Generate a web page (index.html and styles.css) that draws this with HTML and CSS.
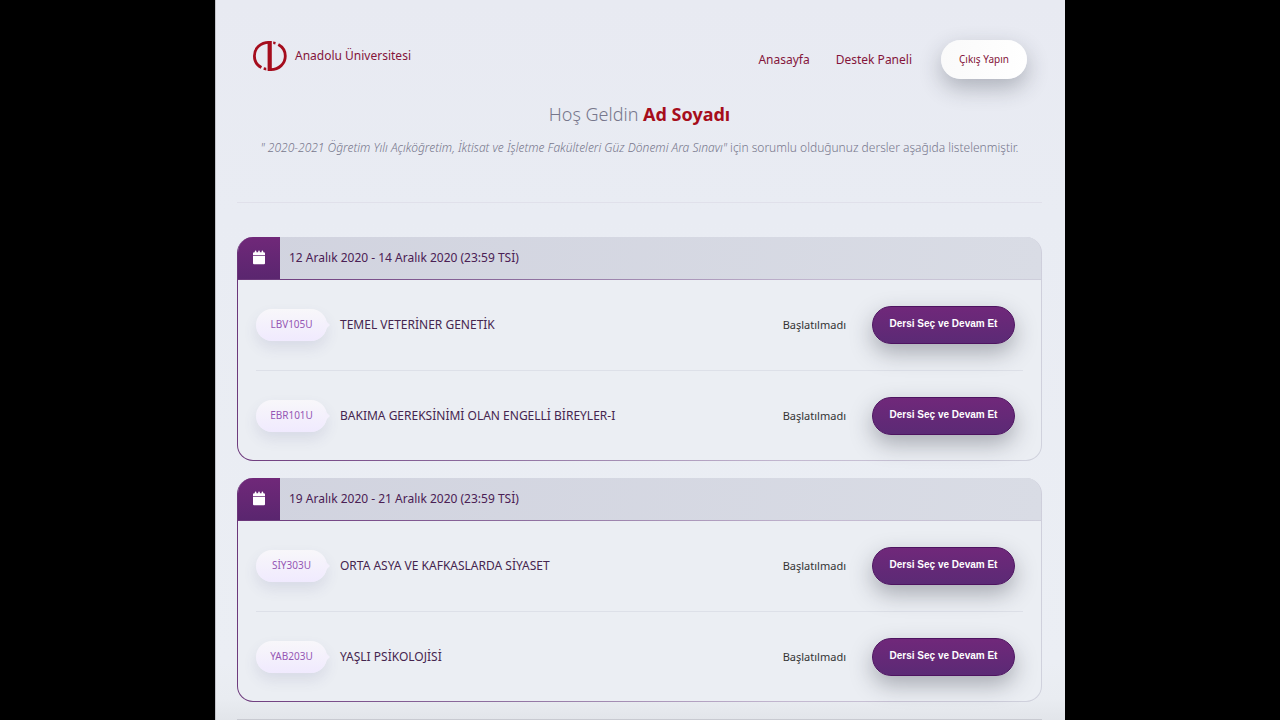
FILE: index.html
```html
<!DOCTYPE html>
<html lang="tr">
<head>
<meta charset="utf-8">
<meta name="viewport" content="width=device-width, initial-scale=1">
<title>Anadolu Üniversitesi</title>
<link rel="stylesheet" href="styles.css">
</head>
<body>
<svg class="defs" aria-hidden="true">
  <symbol id="calendar" viewBox="0 0 12 15">
    <path d="M0 5V3.400Q0 2.300 1.200 2.300H1.800V1.200Q1.800.4 2.600.4T3.400 1.200V2.300H5.200V1.200Q5.200.4 6 .4T6.800 1.200V2.300H8.600V1.200Q8.600.4 9.400.4T10.200 1.200V2.300H10.800Q12 2.300 12 3.400V5Z"/>
    <path d="M0 5.700h12v7.500q0 1-1 1H1q-1 0-1-1z"/>
  </symbol>
</svg>
<div class="page">
  <header class="top">
    <a class="brand" href="#">
      <svg class="logo" viewBox="0 0 36 32" aria-hidden="true">
        <g fill="none" stroke="#a50d1d" stroke-width="2.800">
          <path d="M18.400 2.400H17C8.500 2.400 2.400 8.400 2.400 16c0 5 2.500 9.200 7 11.600"/>
          <path d="M17 29.600h1.800c8.300 0 14.500-6.100 14.500-13.600 0-5-2.600-9.200-7-11.600"/>
        </g>
        <path fill="#a50d1d" d="M15.600 1h4.200v30h-4.200zM21.200 1.400l2.600.7-.6 2.500-2-.5zM12 27.200l2.300.6v2.700l-2.900-.7z"/>
      </svg>
      <span>Anadolu Üniversitesi</span>
    </a>
    <nav class="nav">
      <a href="#">Anasayfa</a>
      <a href="#">Destek Paneli</a>
      <button class="exit" type="button">Çıkış Yapın</button>
    </nav>
  </header>
  <div class="intro">
    <h1>Hoş Geldin <strong>Ad Soyadı</strong></h1>
    <p><em>" 2020-2021 Öğretim Yılı Açıköğretim, İktisat ve İşletme Fakülteleri Güz Dönemi Ara Sınavı"</em> için sorumlu olduğunuz dersler aşağıda listelenmiştir.</p>
  </div>
  <main class="list">
    <section class="card">
      <h2 class="head"><span class="icon"><svg aria-hidden="true"><use href="#calendar"/></svg></span><span>12 Aralık 2020 - 14 Aralık 2020 (23:59 TSİ)</span></h2>
      <div class="rows">
        <div class="row"><span class="code">LBV105U</span><span class="name">TEMEL VETERİNER GENETİK</span><span class="state">Başlatılmadı</span><button class="go" type="button">Dersi Seç ve Devam Et</button></div>
        <div class="row"><span class="code">EBR101U</span><span class="name">BAKIMA GEREKSİNİMİ OLAN ENGELLİ BİREYLER-I</span><span class="state">Başlatılmadı</span><button class="go" type="button">Dersi Seç ve Devam Et</button></div>
      </div>
    </section>
    <section class="card">
      <h2 class="head"><span class="icon"><svg aria-hidden="true"><use href="#calendar"/></svg></span><span>19 Aralık 2020 - 21 Aralık 2020 (23:59 TSİ)</span></h2>
      <div class="rows">
        <div class="row"><span class="code">SİY303U</span><span class="name">ORTA ASYA VE KAFKASLARDA SİYASET</span><span class="state">Başlatılmadı</span><button class="go" type="button">Dersi Seç ve Devam Et</button></div>
        <div class="row"><span class="code">YAB203U</span><span class="name">YAŞLI PSİKOLOJİSİ</span><span class="state">Başlatılmadı</span><button class="go" type="button">Dersi Seç ve Devam Et</button></div>
      </div>
    </section>
  </main>
  <hr class="end">
</div>
</body>
</html>
```
FILE: styles.css
```css
* { box-sizing: border-box; }
body {
  margin: 0;
  background: #000;
  font-family: "Noto Sans", "Open Sans", sans-serif;
  font-size: 12px;
  line-height: 16px;
}
.defs { display: none; }
.page {
  max-width: 850px;
  min-height: 100vh;
  margin: 0 auto;
  padding: 0 23px 0 21px;
  border-left: 1px solid #c3c4ca;
  background: linear-gradient(#e8eaf2, #e9ecf3 30%, #ebeef4 92%, #e9ecf1 97%, #e2e5ea);
}
.top {
  display: flex;
  justify-content: space-between;
  padding: 40px 15px 0;
}
a { color: #84143a; text-decoration: none; }
.brand { display: flex; align-items: center; gap: 7px; height: 32px; }
.logo { width: 36px; height: 32px; }
.nav { display: flex; align-items: center; gap: 26px; }
.exit {
  width: 86px;
  height: 39px;
  margin-left: 3px;
  padding: 0 0 2px;
  border: 0;
  border-radius: 20px;
  background: linear-gradient(90deg, #fafafa, #fff);
  box-shadow: 0 9px 22px rgba(40, 45, 60, .3);
  color: #84143a;
  font: 10px/16px "Noto Sans", sans-serif;
}
.intro {
  padding: 21px 0 46px;
  border-bottom: 1px solid #e0e0ea;
  color: #77778c;
  text-align: center;
}
h1 { margin: 0 0 12px; font-size: 18px; line-height: 28px; font-weight: 300; }
h1 strong { color: #a60d1b; font-weight: 700; }
.intro p { margin: 0; font-size: 12px; font-weight: 300; }
.list { display: grid; gap: 17px; padding-top: 34px; }
.card {
  padding: 0 1px 1px;
  border-radius: 16px;
  background: linear-gradient(100deg, #6a3479, #8e6f9f 35%, #c3b8d0 70%, #d0d2dd);
}
.head {
  display: flex;
  align-items: center;
  gap: 9px;
  margin: 0;
  border-radius: 15px 15px 0 0;
  overflow: hidden;
  background: linear-gradient(100deg, #d1d3df, #d9dce5);
  color: #4a2054;
  font-size: 12px;
  font-weight: 400;
}
.icon {
  display: grid;
  place-items: center;
  width: 42px;
  height: 42px;
  padding-bottom: 1px;
  background: linear-gradient(#702879, #5a266f);
}
.icon svg { width: 12px; height: 15px; fill: #fff; }
.rows {
  margin-top: 1px;
  padding: 0 18px;
  border-radius: 0 0 15px 15px;
  background: #ebeef3;
}
.row { display: flex; align-items: center; height: 90px; }
.row + .row { border-top: 1px solid #dde0e8; }
.code {
  position: relative;
  width: 71px;
  padding: 7px 0 9px;
  border-radius: 16px;
  background: linear-gradient(#f8f7fa, #f0eafe);
  box-shadow: 0 7px 14px rgba(80, 80, 140, .12);
  color: #9557b4;
  font-size: 10px;
  text-align: center;
}
.code::after {
  content: "";
  position: absolute;
  left: 100%;
  top: 50%;
  margin: -5px 0 0 -2px;
  border: 5px solid transparent;
  border-left-color: #f4f0fc;
  border-right: 0;
}
.name { flex: 1; margin-left: 13px; color: #45254f; }
.state { margin-right: 26px; color: #333; font-size: 11px; }
.go {
  width: 143px;
  height: 38px;
  margin-right: 8px;
  padding: 0 0 2px;
  border: 1px solid #4d1460;
  border-radius: 19px;
  background: linear-gradient(#70287a, #5b2a75);
  box-shadow: 0 9px 22px rgba(40, 45, 60, .34);
  color: #fff;
  font: bold 10px/16px "Liberation Sans", Arial, sans-serif;
}
.end { height: 1px; margin: 17px 0 0; border: 0; background: #c8cad1; }
```
